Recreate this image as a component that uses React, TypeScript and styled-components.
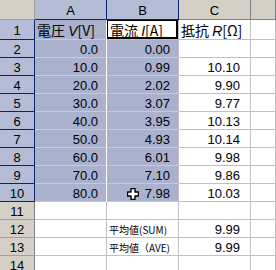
import React from 'react'
import styled, { createGlobalStyle } from 'styled-components'

const GlobalStyle = createGlobalStyle`
    html, body {
        margin: 0;
        padding: 0;
        background: #ffffff;
        overflow: hidden;
    }
`

const HEAD_BG = '#d4d0c8'
const HEAD_SEL = '#b4bcd6'
const CELL_SEL = '#a9b1cc'
const NAVY = '#0a246a'
const GRID = '#c0c0c0'
const FONT = `"Liberation Sans", "Noto Sans CJK JP", Arial, sans-serif`

type Row = {
    a?: string
    b?: string
    c?: string
    note?: string
}

const rows: Row[] = [
    { a: '0.0', b: '0.00' },
    { a: '10.0', b: '0.99', c: '10.10' },
    { a: '20.0', b: '2.02', c: '9.90' },
    { a: '30.0', b: '3.07', c: '9.77' },
    { a: '40.0', b: '3.95', c: '10.13' },
    { a: '50.0', b: '4.93', c: '10.14' },
    { a: '60.0', b: '6.01', c: '9.98' },
    { a: '70.0', b: '7.10', c: '9.86' },
    { a: '80.0', b: '7.98', c: '10.03' },
    {},
    { note: '平均値(SUM)', c: '9.99' },
    { note: '平均値（AVE)', c: '9.99' },
    {},
]

export default function App() {
    return (
        <>
            <GlobalStyle />
            <Sheet>
                <Corner />
                <ColHead $active>A</ColHead>
                <ColHead $active>B</ColHead>
                <ColHead>C</ColHead>
                <ColHead />

                <RowHead $active>1</RowHead>
                <Cell $sel $split>
                    <Title>電圧 <i>V</i>[V]</Title>
                </Cell>
                <ActiveCell>
                    <Title>電流 <i>I</i>[A]</Title>
                </ActiveCell>
                <Cell>
                    <Title>抵抗 <i>R</i>[Ω]</Title>
                </Cell>
                <Cell />

                {rows.map((r, i) => {
                    const n = i + 2
                    const sel = n <= 10
                    return (
                        <React.Fragment key={n}>
                            <RowHead $active={sel}>{n}</RowHead>
                            <Cell $sel={sel} $split={sel} $num>{r.a}</Cell>
                            {r.note ? (
                                <Cell>
                                    <Note>{r.note}</Note>
                                </Cell>
                            ) : (
                                <Cell $sel={sel} $num>{r.b}</Cell>
                            )}
                            <Cell $num $pad={10}>{r.c}</Cell>
                            <Cell />
                        </React.Fragment>
                    )
                })}
            </Sheet>
            <Cursor width="12" height="12" viewBox="0 0 12 12">
                <path
                    d="M4 0.5 H8 V4 H11.5 V8 H8 V11.5 H4 V8 H0.5 V4 H4 Z"
                    fill="#ffffff"
                    stroke="#000000"
                    strokeWidth="1.4"
                    strokeLinejoin="round"
                />
            </Cursor>
        </>
    )
}

const Sheet = styled.div`
    display: grid;
    grid-template-columns: 35px 72px 72px 72px 1fr;
    grid-template-rows: 20px 20px repeat(13, 18px);
    width: 276px;
    height: 270px;
    overflow: hidden;
    font-family: ${FONT};
    color: #000;
`

const Corner = styled.div`
    background: ${HEAD_BG};
    border-right: 1px solid #a0a0a0;
    border-bottom: 1px solid #a0a0a0;
`

const ColHead = styled.div<{ $active?: boolean }>`
    display: flex;
    align-items: center;
    justify-content: center;
    background: ${(p) => (p.$active ? HEAD_SEL : HEAD_BG)};
    border-right: 1px solid ${(p) => (p.$active ? NAVY : '#808080')};
    border-bottom: 1px solid ${(p) => (p.$active ? NAVY : '#808080')};
    font-size: 13px;
    padding-top: 1px;
`

const RowHead = styled.div<{ $active?: boolean }>`
    display: flex;
    align-items: center;
    justify-content: center;
    background: ${(p) => (p.$active ? HEAD_SEL : HEAD_BG)};
    border-right: 1px solid ${(p) => (p.$active ? NAVY : '#808080')};
    border-bottom: 1px solid ${(p) => (p.$active ? NAVY : '#a0a0a0')};
    font-size: 13px;
    padding-top: 1px;
`

const Cell = styled.div<{ $sel?: boolean; $split?: boolean; $num?: boolean; $pad?: number }>`
    display: flex;
    align-items: center;
    justify-content: ${(p) => (p.$num ? 'flex-end' : 'flex-start')};
    padding: 1px ${(p) => (p.$num ? p.$pad ?? 8 : 2)}px 0 2px;
    background: ${(p) => (p.$sel ? CELL_SEL : '#ffffff')};
    border-right: 1px solid ${(p) => (p.$split ? '#ffffff' : GRID)};
    border-bottom: 1px solid ${(p) => (p.$sel ? '#c6cada' : GRID)};
    font-size: 13px;
    white-space: nowrap;
    overflow: visible;
`

const ActiveCell = styled.div`
    display: flex;
    align-items: center;
    padding: 1px 2px 0 3px;
    background: #ffffff;
    border-right: 1px solid ${GRID};
    border-bottom: 1px solid ${GRID};
    box-shadow: inset 0 0 0 1px #000, inset -1px -1px 0 1px #000;
    white-space: nowrap;
`

const Title = styled.span`
    font-family: "Noto Sans CJK JP", "Liberation Sans", sans-serif;
    font-size: 14px;
    line-height: 1;

    i {
        font-family: "Liberation Sans", sans-serif;
        font-style: italic;
    }
`

const Note = styled.span`
    font-family: "Noto Sans CJK JP", sans-serif;
    font-size: 10px;
`

const Cursor = styled.svg`
    position: absolute;
    left: 127px;
    top: 188px;
`
